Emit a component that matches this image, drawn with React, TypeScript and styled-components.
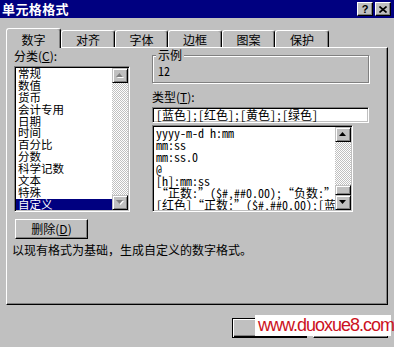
import styled, { createGlobalStyle } from "styled-components";

const GlobalStyle = createGlobalStyle`
  html, body {
    margin: 0;
    padding: 0;
    background: #c0c0c0;
  }
  body {
    font-family: "Noto Sans CJK SC", "Noto Sans", sans-serif;
    font-size: 12px;
    color: #000;
  }
  * {
    box-sizing: border-box;
  }
`;

const mono = `"Noto Sans Mono CJK SC", "Noto Sans CJK SC", "Liberation Mono", monospace`;

const Dialog = styled.div`
  position: relative;
  width: 394px;
  height: 347px;
  background: #c0c0c0;
  overflow: hidden;
  display: flex;
  flex-direction: column;
`;

const TitleBar = styled.div`
  height: 18px;
  background: #000080;
  display: flex;
  align-items: center;
  padding: 0 3px 0 2px;
`;

const Title = styled.div`
  flex: 1;
  color: #fff;
  font-weight: bold;
  font-size: 13px;
  line-height: 18px;
  letter-spacing: 0.4px;
`;

const TitleButton = styled.div`
  width: 16px;
  height: 14px;
  margin-left: 2px;
  background: #c0c0c0;
  border: 1px solid;
  border-color: #fff #000 #000 #fff;
  box-shadow: inset -1px -1px #808080;
  display: flex;
  align-items: center;
  justify-content: center;
  font-family: "Liberation Sans", sans-serif;
  font-weight: bold;
  font-size: 11px;
  line-height: 12px;
`;

const Body = styled.div`
  padding: 10px 6px 0 6px;
`;

const TabRow = styled.div`
  display: flex;
  align-items: flex-end;
  height: 19px;
`;

const Tab = styled.div<{ $active?: boolean; $w: number }>`
  position: relative;
  z-index: ${(p) => (p.$active ? 1 : 0)};
  width: ${(p) => p.$w}px;
  height: ${(p) => (p.$active ? 20 : 17)}px;
  margin-bottom: ${(p) => (p.$active ? -1 : 0)}px;
  padding-top: ${(p) => (p.$active ? 4 : 2)}px;
  background: #c0c0c0;
  border: 1px solid;
  border-bottom: none;
  border-color: #fff #000 transparent #fff;
  border-radius: 3px 3px 0 0;
  box-shadow: inset -1px 0 #808080;
  text-align: center;
  line-height: 14px;
`;

const Panel = styled.div`
  height: 258px;
  border: 1px solid;
  border-color: #fff #000 #000 #fff;
  box-shadow: inset -1px -1px #808080;
  padding: 2px 6px 0 7px;
`;

const Columns = styled.div`
  display: flex;
  gap: 22px;
`;

const LeftColumn = styled.div`
  width: 116px;
  display: flex;
  flex-direction: column;
`;

const RightColumn = styled.div`
  width: 217px;
  display: flex;
  flex-direction: column;
`;

const Label = styled.div<{ $gap?: number }>`
  height: 16px;
  line-height: 12px;
  margin-top: ${(p) => p.$gap ?? 0}px;
`;

const Sunken = styled.div<{ $h: number }>`
  height: ${(p) => p.$h}px;
  background: #fff;
  border: 1px solid;
  border-color: #808080 #fff #fff #808080;
  box-shadow: inset 1px 1px #000, inset -1px -1px #c0c0c0;
  padding: 1px;
`;

const ListBox = styled(Sunken)<{ $w?: number }>`
  display: flex;
  overflow: hidden;
  width: ${(p) => (p.$w ? `${p.$w}px` : "auto")};
  margin-top: ${(p) => (p.$w ? 2 : 0)}px;
`;

const Items = styled.div<{ $mono?: boolean }>`
  flex: 1;
  overflow: hidden;
  font-family: ${(p) => (p.$mono ? mono : "inherit")};
  font-size: ${(p) => (p.$mono ? 12 : 11.5)}px;
`;

const Item = styled.div<{ $selected?: boolean; $lh: number }>`
  height: ${(p) => p.$lh}px;
  line-height: ${(p) => p.$lh}px;
  padding-left: 2px;
  white-space: nowrap;
  background: ${(p) => (p.$selected ? "#000080" : "transparent")};
  color: ${(p) => (p.$selected ? "#fff" : "#000")};
`;

const ScrollBar = styled.div`
  width: 16px;
  display: flex;
  flex-direction: column;
`;

const ScrollButton = styled.div`
  height: 15px;
  flex: none;
  background: #c0c0c0;
  border: 1px solid;
  border-color: #c0c0c0 #000 #000 #c0c0c0;
  box-shadow: inset 1px 1px #fff, inset -1px -1px #808080;
  display: flex;
  align-items: center;
  justify-content: center;
`;

const Track = styled.div`
  flex: 1;
  display: flex;
  flex-direction: column;
  justify-content: flex-end;
  background: repeating-conic-gradient(#c0c0c0 0% 25%, #fff 0% 50%) 0 0 / 2px 2px;
`;

const Thumb = styled(ScrollButton)`
  height: 10px;
`;

const GroupBox = styled.div`
  position: relative;
  margin-top: 5px;
  height: 28px;
  border: 1px solid #808080;
  box-shadow: 1px 1px #fff, inset 1px 1px #fff;
  padding: 8px 5px 0;
  font-family: ${mono};
  line-height: 14px;
`;

const Legend = styled.span`
  position: absolute;
  top: -7px;
  left: 3px;
  padding: 0 2px;
  background: #c0c0c0;
  font-family: "Noto Sans CJK SC", sans-serif;
  line-height: 12px;
`;

const Field = styled(Sunken)`
  padding: 1px 3px;
  line-height: 12px;
  font-family: ${mono};
  white-space: nowrap;
  overflow: hidden;
`;

const Button = styled.div<{ $w: number; $default?: boolean }>`
  width: ${(p) => p.$w}px;
  height: 20px;
  background: #c0c0c0;
  border: 1px solid;
  border-color: ${(p) => (p.$default ? "#000" : "#fff #000 #000 #fff")};
  box-shadow: ${(p) =>
    p.$default
      ? "inset 1px 1px #fff, inset -1px -1px #000, inset -2px -2px #808080"
      : "inset -1px -1px #808080"};
  display: flex;
  align-items: center;
  justify-content: center;
  line-height: 12px;
`;

const DeleteRow = styled.div`
  margin: 7px 0 0 1px;
`;

const Hint = styled.div`
  margin: 5px 0 0 -2px;
  line-height: 12px;
`;

const Footer = styled.div`
  display: flex;
  justify-content: flex-end;
  gap: 6px;
  padding: 13px 6px 0 0;
`;

const Watermark = styled.div`
  position: absolute;
  left: 255px;
  top: 315px;
  width: 136px;
  height: 21px;
  background: #fff;
  color: #cc1122;
  font-family: "Liberation Sans", Arial, sans-serif;
  font-size: 18px;
  letter-spacing: -1px;
  line-height: 21px;
  padding-left: 3px;
  white-space: nowrap;
`;

function Arrow({ down, disabled }: { down?: boolean; disabled?: boolean }) {
  const pts = down ? "0,0 7,0 3.5,4" : "3.5,0 7,4 0,4";
  return (
    <svg width="8" height="5" viewBox="0 0 8 5">
      {disabled && <polygon points={pts} fill="#fff" transform="translate(1,1)" />}
      <polygon points={pts} fill={disabled ? "#808080" : "#000"} />
    </svg>
  );
}

function Scroll({ disabled, thumb }: { disabled?: boolean; thumb?: boolean }) {
  return (
    <ScrollBar>
      <ScrollButton>
        <Arrow disabled={disabled} />
      </ScrollButton>
      <Track>{thumb && <Thumb />}</Track>
      <ScrollButton>
        <Arrow down disabled={disabled} />
      </ScrollButton>
    </ScrollBar>
  );
}

const tabs = ["数字", "对齐", "字体", "边框", "图案", "保护"];
const categories = [
  "常规",
  "数值",
  "货币",
  "会计专用",
  "日期",
  "时间",
  "百分比",
  "分数",
  "科学记数",
  "文本",
  "特殊",
  "自定义",
];
const formats = [
  "yyyy-m-d h:mm",
  "mm:ss",
  "mm:ss.0",
  "@",
  "[h]:mm:ss",
  "“正数:”($#,##0.00);“负数:”($ #,##0.00)",
  "[红色]“正数:”($#,##0.00);[蓝色]“负数:”($ #,##0.00)",
];

export default function App() {
  return (
    <Dialog>
      <GlobalStyle />
      <TitleBar>
        <Title>单元格格式</Title>
        <TitleButton>?</TitleButton>
        <TitleButton>
          <svg width="8" height="7" viewBox="0 0 8 7">
            <path d="M0.5 0.5 L7.5 6.5 M7.5 0.5 L0.5 6.5" stroke="#000" strokeWidth="1.6" />
          </svg>
        </TitleButton>
      </TitleBar>
      <Body>
        <TabRow>
          {tabs.map((t, i) => (
            <Tab key={t} $active={i === 0} $w={i === 0 ? 55 : 53 + (i % 2)}>
              {t}
            </Tab>
          ))}
        </TabRow>
        <Panel>
          <Columns>
            <LeftColumn>
              <Label>
                分类(<u>C</u>):
              </Label>
              <ListBox $h={146}>
                <Items>
                  {categories.map((c) => (
                    <Item key={c} $lh={11.9} $selected={c === "自定义"}>
                      {c}
                    </Item>
                  ))}
                </Items>
                <Scroll disabled />
              </ListBox>
            </LeftColumn>
            <RightColumn>
              <GroupBox>
                <Legend>示例</Legend>
                12
              </GroupBox>
              <Label $gap={8}>
                类型(<u>T</u>):
              </Label>
              <Field $h={16}>[蓝色];[红色];[黄色];[绿色]</Field>
              <ListBox $h={87} $w={201}>
                <Items $mono>
                  {formats.map((f) => (
                    <Item key={f} $lh={12}>
                      {f}
                    </Item>
                  ))}
                </Items>
                <Scroll thumb />
              </ListBox>
            </RightColumn>
          </Columns>
          <DeleteRow>
            <Button $w={73}>
              删除(<u>D</u>)
            </Button>
          </DeleteRow>
          <Hint>以现有格式为基础，生成自定义的数字格式。</Hint>
        </Panel>
      </Body>
      <Footer>
        <Button $w={75} $default>
          确定
        </Button>
        <Button $w={75}>取消</Button>
      </Footer>
      <Watermark>www.duoxue8.com</Watermark>
    </Dialog>
  );
}
